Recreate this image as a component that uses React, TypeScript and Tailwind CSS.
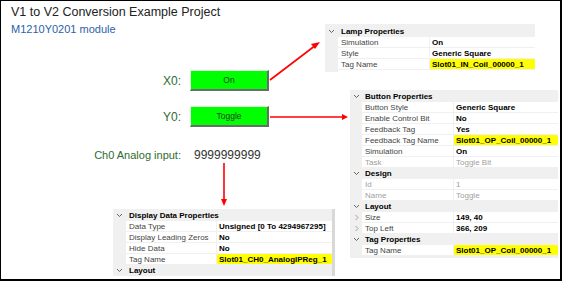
type Row =
  | { kind: "cat"; label: string }
  | { kind: "blank" }
  | {
      kind: "prop";
      label: string;
      value: string;
      disabled?: boolean;
      highlight?: boolean;
      expand?: boolean;
    };

const lampRows: Row[] = [
  { kind: "cat", label: "Lamp Properties" },
  { kind: "prop", label: "Simulation", value: "On" },
  { kind: "prop", label: "Style", value: "Generic Square" },
  { kind: "prop", label: "Tag Name", value: "Slot01_IN_Coil_00000_1", highlight: true },
  { kind: "blank" },
];

const buttonRows: Row[] = [
  { kind: "cat", label: "Button Properties" },
  { kind: "prop", label: "Button Style", value: "Generic Square" },
  { kind: "prop", label: "Enable Control Bit", value: "No" },
  { kind: "prop", label: "Feedback Tag", value: "Yes" },
  { kind: "prop", label: "Feedback Tag Name", value: "Slot01_OP_Coil_00000_1", highlight: true },
  { kind: "prop", label: "Simulation", value: "On" },
  { kind: "prop", label: "Task", value: "Toggle Bit", disabled: true },
  { kind: "cat", label: "Design" },
  { kind: "prop", label: "Id", value: "1", disabled: true },
  { kind: "prop", label: "Name", value: "Toggle", disabled: true },
  { kind: "cat", label: "Layout" },
  { kind: "prop", label: "Size", value: "149, 40", expand: true },
  { kind: "prop", label: "Top Left", value: "366, 209", expand: true },
  { kind: "cat", label: "Tag Properties" },
  { kind: "prop", label: "Tag Name", value: "Slot01_OP_Coil_00000_1", highlight: true },
];

const displayRows: Row[] = [
  { kind: "cat", label: "Display Data Properties" },
  { kind: "prop", label: "Data Type", value: "Unsigned [0 To 4294967295]" },
  { kind: "prop", label: "Display Leading Zeros", value: "No" },
  { kind: "prop", label: "Hide Data", value: "No" },
  { kind: "prop", label: "Tag Name", value: "Slot01_CH0_AnalogIPReg_1", highlight: true },
  { kind: "cat", label: "Layout" },
];

function Chevron({ open }: { open: boolean }) {
  return (
    <svg width="7" height="7" viewBox="0 0 7 7" className="shrink-0">
      {open ? (
        <polyline points="1,2 3.5,4.5 6,2" fill="none" stroke="#555" strokeWidth="0.9" />
      ) : (
        <polyline points="2.5,1 5,3.5 2.5,6" fill="none" stroke="#999" strokeWidth="0.9" />
      )}
    </svg>
  );
}

function PropGrid({
  rows,
  gutter,
  label,
  className,
}: {
  rows: Row[];
  gutter: string;
  label: string;
  className: string;
}) {
  return (
    <div className={`bg-[#f0f0f0] text-[8px] leading-[11px] ${className}`}>
      {rows.map((r, i) => {
        if (r.kind === "cat")
          return (
            <div key={i} className="flex h-[11px] items-center">
              <div className={`flex justify-center ${gutter}`}>
                <Chevron open />
              </div>
              <span className="whitespace-nowrap pl-[3px] font-bold text-black">{r.label}</span>
            </div>
          );
        if (r.kind === "blank")
          return (
            <div key={i} className="flex h-[11px]">
              <div className={gutter} />
              <div className="flex-1 bg-white" />
            </div>
          );
        return (
          <div key={i} className="flex h-[11px]">
            <div className={`flex items-center justify-center ${gutter}`}>
              {r.expand && <Chevron open={false} />}
            </div>
            <div
              className={`whitespace-nowrap border-b border-r border-[#f0f0f0] bg-white pl-[3px] ${label} ${
                r.disabled ? "text-[#a0a0a0]" : "text-[#444]"
              }`}
            >
              {r.label}
            </div>
            <div
              className={`min-w-0 flex-1 whitespace-nowrap border-b border-[#f0f0f0] pl-[2px] ${
                r.highlight ? "rounded-[2px] bg-[#ffff00]" : "bg-white"
              } ${r.disabled ? "text-[#a0a0a0]" : "font-bold text-black"}`}
            >
              {r.value}
            </div>
          </div>
        );
      })}
    </div>
  );
}

function GreenButton({ text }: { text: string }) {
  return (
    <div className="flex h-[21px] w-[79px] items-center justify-center border-b-2 border-r-2 border-l border-t border-b-[#6b6b6b] border-l-[#d8ffd8] border-r-[#6b6b6b] border-t-[#d8ffd8] bg-[#00ff00] text-[8.5px] text-[#2a3a2a]">
      {text}
    </div>
  );
}

export default function App() {
  return (
    <div className="relative flex h-[281px] w-[562px] overflow-hidden border-b-2 border-l border-r-2 border-t border-black bg-white font-['Liberation_Sans',Arial,sans-serif]">
      <div className="flex w-[324px] shrink-0 flex-col">
        <div className="pl-[10px] pt-[4px] text-[12.5px] leading-[15px] text-[#222]">
          V1 to V2 Conversion Example Project
        </div>
        <div className="pl-[10px] pt-[3px] text-[11px] leading-[12px] text-[#2b63a6]">
          M1210Y0201 module
        </div>
        <div className="mt-[35px] flex items-center">
          <span className="w-[189px] pr-[9px] text-right text-[12px] text-[#2f6b2f]">X0:</span>
          <GreenButton text="On" />
        </div>
        <div className="mt-[15px] flex items-center">
          <span className="w-[189px] pr-[9px] text-right text-[12px] text-[#2f6b2f]">Y0:</span>
          <GreenButton text="Toggle" />
        </div>
        <div className="mt-[19px] flex items-center">
          <span className="w-[193px] pr-[13px] text-right text-[11px] text-[#2f6b2f]">
            Ch0 Analog input:
          </span>
          <span className="text-[12px] text-[#333]">9999999999</span>
        </div>
        <div className="mt-[45px] ml-[112px] flex w-[222px] shrink-0 border-r-[3px] border-[#d8d8d8]">
          <PropGrid
            rows={displayRows}
            gutter="w-[13px]"
            label="w-[91px]"
            className="w-full pt-[1px]"
          />
        </div>
      </div>

      <div className="flex flex-col">
        <PropGrid
          rows={lampRows}
          gutter="w-[13px]"
          label="w-[92px]"
          className="mt-[23px] h-[48px] w-[210px] overflow-hidden pt-[2px]"
        />
        <PropGrid
          rows={buttonRows}
          gutter="w-[12px]"
          label="w-[92px]"
          className="ml-[25px] mt-[18px] w-[208px] pb-[2px] pt-[1px]"
        />
      </div>

      <svg
        className="pointer-events-none absolute left-[-1px] top-[-1px]"
        width="564"
        height="282"
        viewBox="0 0 564 282"
      >
        <g stroke="#ff0000" strokeWidth="1.6" fill="#ff0000">
          <line x1="270" y1="80" x2="316" y2="45" />
          <polygon points="320,42 311,44 315,49" stroke="none" />
          <line x1="270" y1="117" x2="343" y2="117" />
          <polygon points="348,117 342,114 342,120" stroke="none" />
          <line x1="224" y1="163" x2="224" y2="200" />
          <polygon points="224,206 221,199 227,199" stroke="none" />
        </g>
      </svg>
    </div>
  );
}
